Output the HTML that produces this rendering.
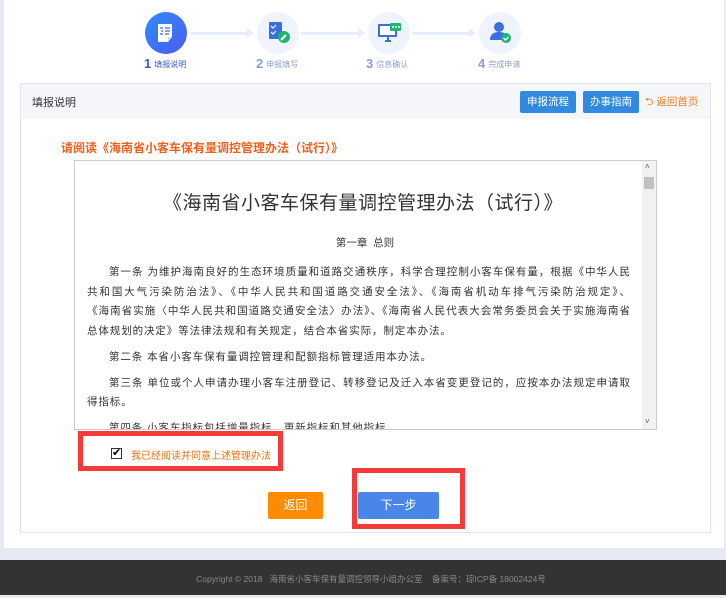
<!DOCTYPE html>
<html><head><meta charset="utf-8"><style>
*{margin:0;padding:0;box-sizing:border-box}
body{width:726px;height:595px;background:#e6eaf2;font-family:"Liberation Sans","Noto Sans CJK SC",sans-serif;position:relative;overflow:hidden}
.abs{position:absolute}
.wrap{left:4px;top:0;width:720px;height:548px;background:#fff}
.circ{width:42px;height:42px;border-radius:50%;background:#eef3fd;top:12px}
.c1{background:linear-gradient(135deg,#2f8cf7,#4a5cf0)}
.lbl{top:56px;font-size:8px;color:#8aa0d8;white-space:nowrap}
.lbl b{font-size:13px;font-weight:bold;margin-right:3px;vertical-align:-1px}
.l1{color:#3a5bd8}
.arr{top:32px;height:3px;background:#e6edfb;width:58px}
.arr:after{content:"";position:absolute;right:-6px;top:-4px;border-left:7px solid #e6edfb;border-top:5.5px solid transparent;border-bottom:5.5px solid transparent}
.panel{left:20px;top:83px;width:691px;height:450px;border:1px solid #dfe4ef}
.hd{left:0;top:0;width:689px;height:35px;background:#f5f6fa}
.btn{top:7px;height:22px;background:#2f8ae0;color:#fff;font-size:10.5px;line-height:22px;text-align:center;border-radius:2px;width:56px}
.doc{left:74px;top:160px;width:583px;height:270px;border:1px solid #ccc;overflow:hidden}
.ln{font-size:10.5px;color:#333;line-height:19.5px;height:19.5px;white-space:nowrap;text-align:justify;text-align-last:justify;width:543px}
.ln.i{padding-left:22px}
.ln.s{text-align-last:left;letter-spacing:0.9px}
.gap{height:6.5px}
</style></head><body>
<div class="abs wrap"></div>
<div class="abs circ c1" style="left:145px"></div>
<svg class="abs" style="left:157px;top:23px" width="18" height="20"><path d="M1 1h14v13l-4 5H1z" fill="#fff"/><path d="M3 5h3M4 8h2M3 11h3M8 5h5M8 8h5M8 11h4" stroke="#3f64e8" stroke-width="1.3"/><path d="M11 19v-5h4" fill="#cfd8fb"/></svg>
<div class="abs arr" style="left:190px"></div>
<div class="abs circ" style="left:257px"></div>
<svg class="abs" style="left:268px;top:21px" width="24" height="24"><rect x="1" y="1" width="13" height="17" rx="1" fill="#3b6fe0"/><path d="M3 5l2 2 3-3M3 11l2 2 3-3" stroke="#fff" stroke-width="1.2" fill="none"/><circle cx="16" cy="16" r="6" fill="#1fb56d"/><path d="M13 19l5-5" stroke="#fff" stroke-width="2"/></svg>
<div class="abs arr" style="left:301px"></div>
<div class="abs circ" style="left:368px"></div>
<svg class="abs" style="left:377px;top:22px" width="26" height="22"><rect x="1" y="2" width="19" height="13" rx="1" fill="#3b6fe0"/><rect x="3" y="4" width="15" height="9" fill="#fff"/><path d="M8 19h6M11 15v4" stroke="#3b6fe0" stroke-width="2"/><rect x="13" y="1" width="11" height="8" rx="1" fill="#1fb56d"/><circle cx="16" cy="5" r="1" fill="#fff"/><circle cx="19" cy="5" r="1" fill="#fff"/><circle cx="22" cy="5" r="1" fill="#fff"/></svg>
<div class="abs arr" style="left:412px"></div>
<div class="abs circ" style="left:479px"></div>
<svg class="abs" style="left:489px;top:21px" width="24" height="24"><circle cx="10" cy="6" r="5" fill="#3b6fe0"/><path d="M1 19c0-6 4-8 9-8s9 2 9 8z" fill="#3b6fe0"/><circle cx="17" cy="17" r="5" fill="#1fb56d"/><path d="M14.5 17l2 2 3-3" stroke="#fff" stroke-width="1.4" fill="none"/></svg>
<div class="abs lbl l1" style="left:144px"><b>1</b>填报说明</div>
<div class="abs lbl" style="left:256px"><b>2</b>申报填写</div>
<div class="abs lbl" style="left:366px"><b>3</b>信息确认</div>
<div class="abs lbl" style="left:478px"><b>4</b>完成申请</div>

<div class="abs panel">
 <div class="abs hd">
  <div class="abs" style="left:11px;top:10px;font-size:11px;color:#333">填报说明</div>
  <div class="abs btn" style="left:499px">申报流程</div>
  <div class="abs btn" style="left:562px">办事指南</div>
  <div class="abs" style="left:624px;top:10px;font-size:10.5px;color:#f07c1c">⮌ 返回首页</div>
 </div>
 <div class="abs" style="left:40px;top:55px;font-size:12px;color:#f0601c;font-weight:bold">请阅读《海南省小客车保有量调控管理办法（试行）》</div>
</div>

<div class="abs doc">
 <div style="width:566px;padding:0 12px">
 <div style="text-align:center;font-size:19px;color:#333;margin-top:27px;letter-spacing:0.5px;padding-left:10px">《海南省小客车保有量调控管理办法（试行）》</div>
 <div style="text-align:center;font-size:10.5px;color:#333;margin-top:20px;margin-bottom:13px;padding-left:14px">第一章&nbsp; 总则</div>
 <div class="ln i">第一条 为维护海南良好的生态环境质量和道路交通秩序，科学合理控制小客车保有量，根据《中华人民</div>
 <div class="ln">共和国大气污染防治法》、《中华人民共和国道路交通安全法》、《海南省机动车排气污染防治规定》、</div>
 <div class="ln">《海南省实施〈中华人民共和国道路交通安全法〉办法》、《海南省人民代表大会常务委员会关于实施海南省</div>
 <div class="ln s">总体规划的决定》等法律法规和有关规定，结合本省实际，制定本办法。</div>
 <div class="gap"></div>
 <div class="ln i s">第二条 本省小客车保有量调控管理和配额指标管理适用本办法。</div>
 <div class="gap"></div>
 <div class="ln i">第三条 单位或个人申请办理小客车注册登记、转移登记及迁入本省变更登记的，应按本办法规定申请取</div>
 <div class="ln s">得指标。</div>
 <div class="gap"></div>
 <div class="ln i s">第四条 小客车指标包括增量指标、更新指标和其他指标。</div>
 </div>
 <div class="abs" style="right:0;top:0;width:14px;height:268px;background:#f1f1f1"><div style="margin:16px 2px 0;height:12px;background:#c1c1c1"></div><div class="abs" style="top:1px;left:3px;font-size:8px;color:#555">˄</div><div class="abs" style="bottom:3px;left:3px;font-size:8px;color:#555">˅</div></div>
</div>

<div class="abs" style="left:78px;top:431px;width:205px;height:40px;border:5px solid #f53a3a"></div>
<div class="abs" style="left:111px;top:448px;width:11px;height:11px;border:1px solid #333;background:#fff;font-size:11px;line-height:9px;color:#000;text-align:center">✔</div>
<div class="abs" style="left:131px;top:447px;font-size:10px;color:#f07010">我已经阅读并同意上述管理办法</div>
<div class="abs" style="left:352px;top:468px;width:113px;height:61px;border:5px solid #f53a3a"></div>
<div class="abs" style="left:268px;top:492px;width:55px;height:27px;background:#ff8c00;border-radius:2px;color:#fff;font-size:12px;line-height:27px;text-align:center">返回</div>
<div class="abs" style="left:358px;top:492px;width:81px;height:27px;background:#4a86e8;border-radius:2px;color:#fff;font-size:12px;line-height:27px;text-align:center">下一步</div>

<div class="abs" style="left:0;top:560px;width:726px;height:35px;background:#333;color:#888;font-size:8.5px;text-align:center;line-height:38px;padding-left:16px">Copyright © 2018&nbsp;&nbsp; 海南省小客车保有量调控领导小组办公室&nbsp;&nbsp;&nbsp; 备案号：琼ICP备 18002424号</div>
</body></html>
